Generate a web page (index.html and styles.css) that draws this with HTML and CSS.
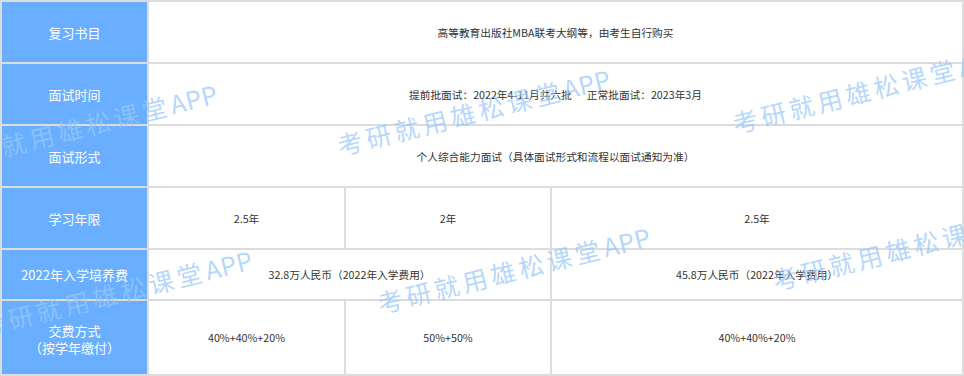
FILE: index.html
```html
<!DOCTYPE html>
<html lang="zh-CN">
<head>
<meta charset="utf-8">
<title>MBA 项目信息</title>
<link rel="stylesheet" href="styles.css">
</head>
<body>
<div class="page">
  <div class="table">
    <div class="label">复习书目</div>
    <div class="cell span3">高等教育出版社MBA联考大纲等，由考生自行购买</div>

    <div class="label">面试时间</div>
    <div class="cell span3">提前批面试：2022年4-11月共六批<span class="gap"></span>正常批面试：2023年3月</div>

    <div class="label">面试形式</div>
    <div class="cell span3">个人综合能力面试（具体面试形式和流程以面试通知为准）</div>

    <div class="label">学习年限</div>
    <div class="cell">2.5年</div>
    <div class="cell">2年</div>
    <div class="cell">2.5年</div>

    <div class="label">2022年入学培养费</div>
    <div class="cell span2">32.8万人民币（2022年入学费用）</div>
    <div class="cell">45.8万人民币（2022年入学费用）</div>

    <div class="label two">交费方式<br>（按学年缴付）</div>
    <div class="cell">40%+40%+20%</div>
    <div class="cell">50%+50%</div>
    <div class="cell">40%+40%+20%</div>
  </div>

  <div class="wm wm-a">考研就用雄松课堂<span class="lat">APP</span></div>
  <div class="wm wm-b">考研就用雄松课堂<span class="lat">APP</span></div>
  <div class="wm wm-c">考研就用雄松课堂<span class="lat">APP</span></div>
  <div class="wm wm-d">考研就用雄松课堂<span class="lat">APP</span></div>
  <div class="wm wm-e">考研就用雄松课堂<span class="lat">APP</span></div>
  <div class="wm wm-f">考研就用雄松课堂<span class="lat">APP</span></div>
  <div class="wm wm-g">考研就用雄松课堂<span class="lat">APP</span></div>
</div>
</body>
</html>
```

FILE: styles.css
```css
html, body {
  margin: 0;
  padding: 0;
  background: #ffffff;
}

body {
  width: 964px;
  height: 376px;
  overflow: hidden;
  font-family: "Noto Sans CJK SC", "Microsoft YaHei", "Noto Sans", sans-serif;
}

.page {
  position: relative;
  width: 964px;
  height: 376px;
  overflow: hidden;
}

.table {
  display: grid;
  grid-template-columns: 145px 195px 204px 410px;
  grid-template-rows: 60px 60px 60px 60px 49px 73px;
  gap: 2px;
  padding: 2px;
  background: #dcdcdc;
  width: 964px;
  height: 376px;
  box-sizing: border-box;
}

.label {
  background: #69aeff;
  color: #ffffff;
  font-size: 13px;
  display: flex;
  align-items: center;
  justify-content: center;
  text-align: center;
}

.label.two {
  line-height: 17px;
  padding-top: 2px;
  box-sizing: border-box;
}

.cell {
  background: #ffffff;
  color: #333333;
  font-size: 10.7px;
  display: flex;
  align-items: center;
  justify-content: center;
  text-align: center;
  white-space: nowrap;
}

.span3 {
  grid-column: span 3;
}

.span2 {
  grid-column: span 2;
}

.gap {
  display: inline-block;
  width: 15px;
}

.wm {
  position: absolute;
  white-space: nowrap;
  font-size: 25px;
  line-height: 25px;
  letter-spacing: 4px;
  color: rgba(152, 200, 250, 0.73);
  transform-origin: 0 50%;
  transform: rotate(-14deg);
  pointer-events: none;
}

.wm .lat {
  letter-spacing: 0.5px;
}

.wm-a { left: -55px; top: 148px; }
.wm-b { left: 338px; top: 133px; }
.wm-c { left: 733px; top: 111px; }
.wm-d { left: -20px; top: 314px; }
.wm-e { left: 378px; top: 291px; }
.wm-f { left: 773px; top: 268px; }
.wm-g { left: 298px; top: -25px; }
```
